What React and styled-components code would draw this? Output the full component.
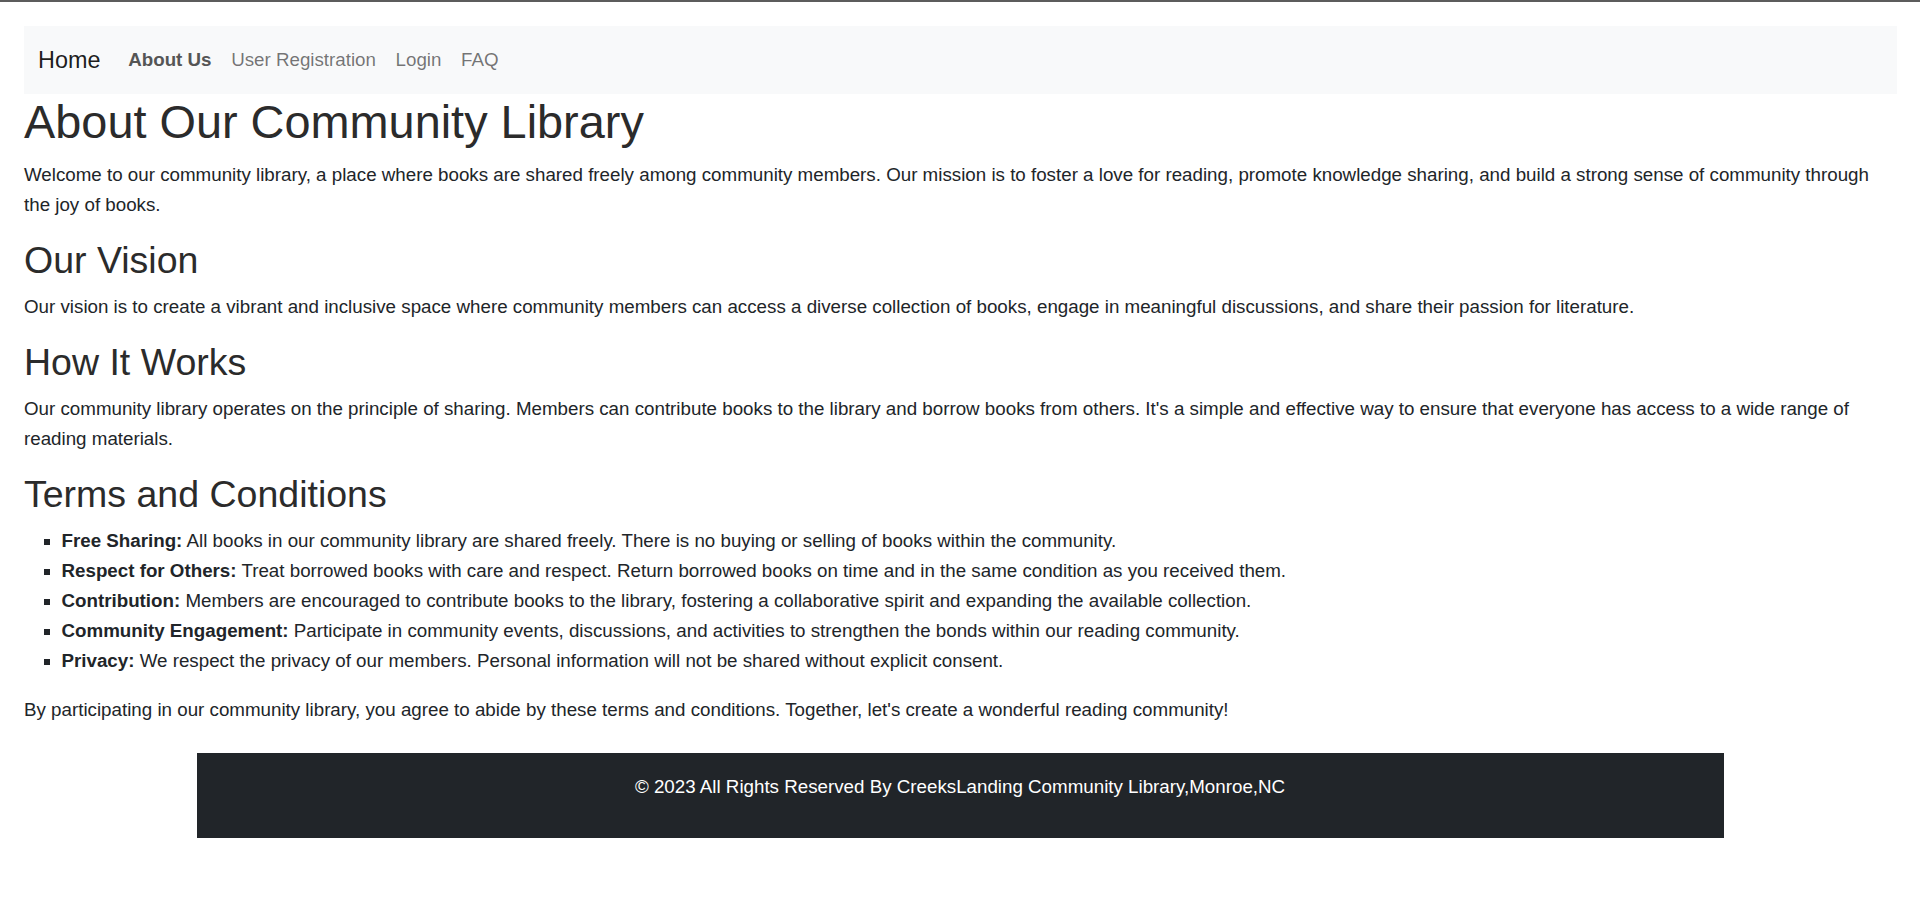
import React from "react";
import { styled, createGlobalStyle } from "styled-components";

const GlobalStyle = createGlobalStyle`
    * {
        box-sizing: border-box;
    }
    body {
        margin: 0;
        border-top: 2px solid #5c5c5c;
        font-family: "Liberation Sans", Arial, sans-serif;
        font-size: 18.75px;
        line-height: 30px;
        color: #212529;
        background: #fff;
    }
`;

const terms = [
    {
        title: "Free Sharing:",
        text: "All books in our community library are shared freely. There is no buying or selling of books within the community.",
    },
    {
        title: "Respect for Others:",
        text: "Treat borrowed books with care and respect. Return borrowed books on time and in the same condition as you received them.",
    },
    {
        title: "Contribution:",
        text: "Members are encouraged to contribute books to the library, fostering a collaborative spirit and expanding the available collection.",
    },
    {
        title: "Community Engagement:",
        text: "Participate in community events, discussions, and activities to strengthen the bonds within our reading community.",
    },
    {
        title: "Privacy:",
        text: "We respect the privacy of our members. Personal information will not be shared without explicit consent.",
    },
];

function App() {
    return (
        <>
            <GlobalStyle />
            <Page>
                <NavBar>
                    <Brand href="#">Home</Brand>
                    <NavLink href="#" $active>
                        About Us
                    </NavLink>
                    <NavLink href="#">User Registration</NavLink>
                    <NavLink href="#">Login</NavLink>
                    <NavLink href="#">FAQ</NavLink>
                </NavBar>

                <Title>About Our Community Library</Title>
                <Paragraph>
                    Welcome to our community library, a place where books are
                    shared freely among community members. Our mission is to
                    foster a love for reading, promote knowledge sharing, and
                    build a strong sense of community through the joy of books.
                </Paragraph>

                <Heading>Our Vision</Heading>
                <Paragraph>
                    Our vision is to create a vibrant and inclusive space where
                    community members can access a diverse collection of books,
                    engage in meaningful discussions, and share their passion
                    for literature.
                </Paragraph>

                <Heading>How It Works</Heading>
                <Paragraph>
                    Our community library operates on the principle of sharing.
                    Members can contribute books to the library and borrow books
                    from others. It's a simple and effective way to ensure that
                    everyone has access to a wide range of reading materials.
                </Paragraph>

                <Heading>Terms and Conditions</Heading>
                <TermsList>
                    {terms.map((t) => (
                        <li key={t.title}>
                            <strong>{t.title}</strong> {t.text}
                        </li>
                    ))}
                </TermsList>
                <Paragraph>
                    By participating in our community library, you agree to
                    abide by these terms and conditions. Together, let's create
                    a wonderful reading community!
                </Paragraph>
            </Page>

            <Footer>
                <p>
                    © 2023 All Rights Reserved By CreeksLanding Community
                    Library,Monroe,NC
                </p>
            </Footer>
        </>
    );
}

export default App;

const Page = styled.div`
    padding: 24px 23px 0 24px;
`;
const NavBar = styled.nav`
    display: flex;
    align-items: center;
    height: 68px;
    padding: 0 14px;
    background-color: #f8f9fa;
`;
const Brand = styled.a`
    font-size: 23.4px;
    color: rgba(0, 0, 0, 0.9);
    text-decoration: none;
    margin-right: 18px;
`;
const NavLink = styled.a`
    padding: 0 9.8px;
    font-size: 18.75px;
    text-decoration: none;
    color: ${(p) => (p.$active ? "#555" : "rgba(0, 0, 0, 0.55)")};
    font-weight: ${(p) => (p.$active ? 700 : 400)};
`;
const Title = styled.h1`
    margin: 0 0 9.4px;
    font-size: 46.875px;
    font-weight: 400;
    line-height: 1.2;
    color: #2b2b2b;
`;
const Heading = styled.h2`
    margin: 0 0 8.8px;
    font-size: 37.5px;
    font-weight: 400;
    line-height: 1.2;
    color: #2b2b2b;
`;
const Paragraph = styled.p`
    margin: 0 0 18.4px;
`;
const TermsList = styled.ul`
    margin: 0 0 18.4px;
    padding-left: 37.5px;
    list-style: square;
    strong {
        font-weight: 700;
    }
`;
const Footer = styled.footer`
    width: 1527px;
    margin: 28px auto 0;
    padding: 19px 0 17px;
    background-color: #212529;
    color: #fff;
    text-align: center;
    p {
        margin: 0 0 19px;
    }
`;
